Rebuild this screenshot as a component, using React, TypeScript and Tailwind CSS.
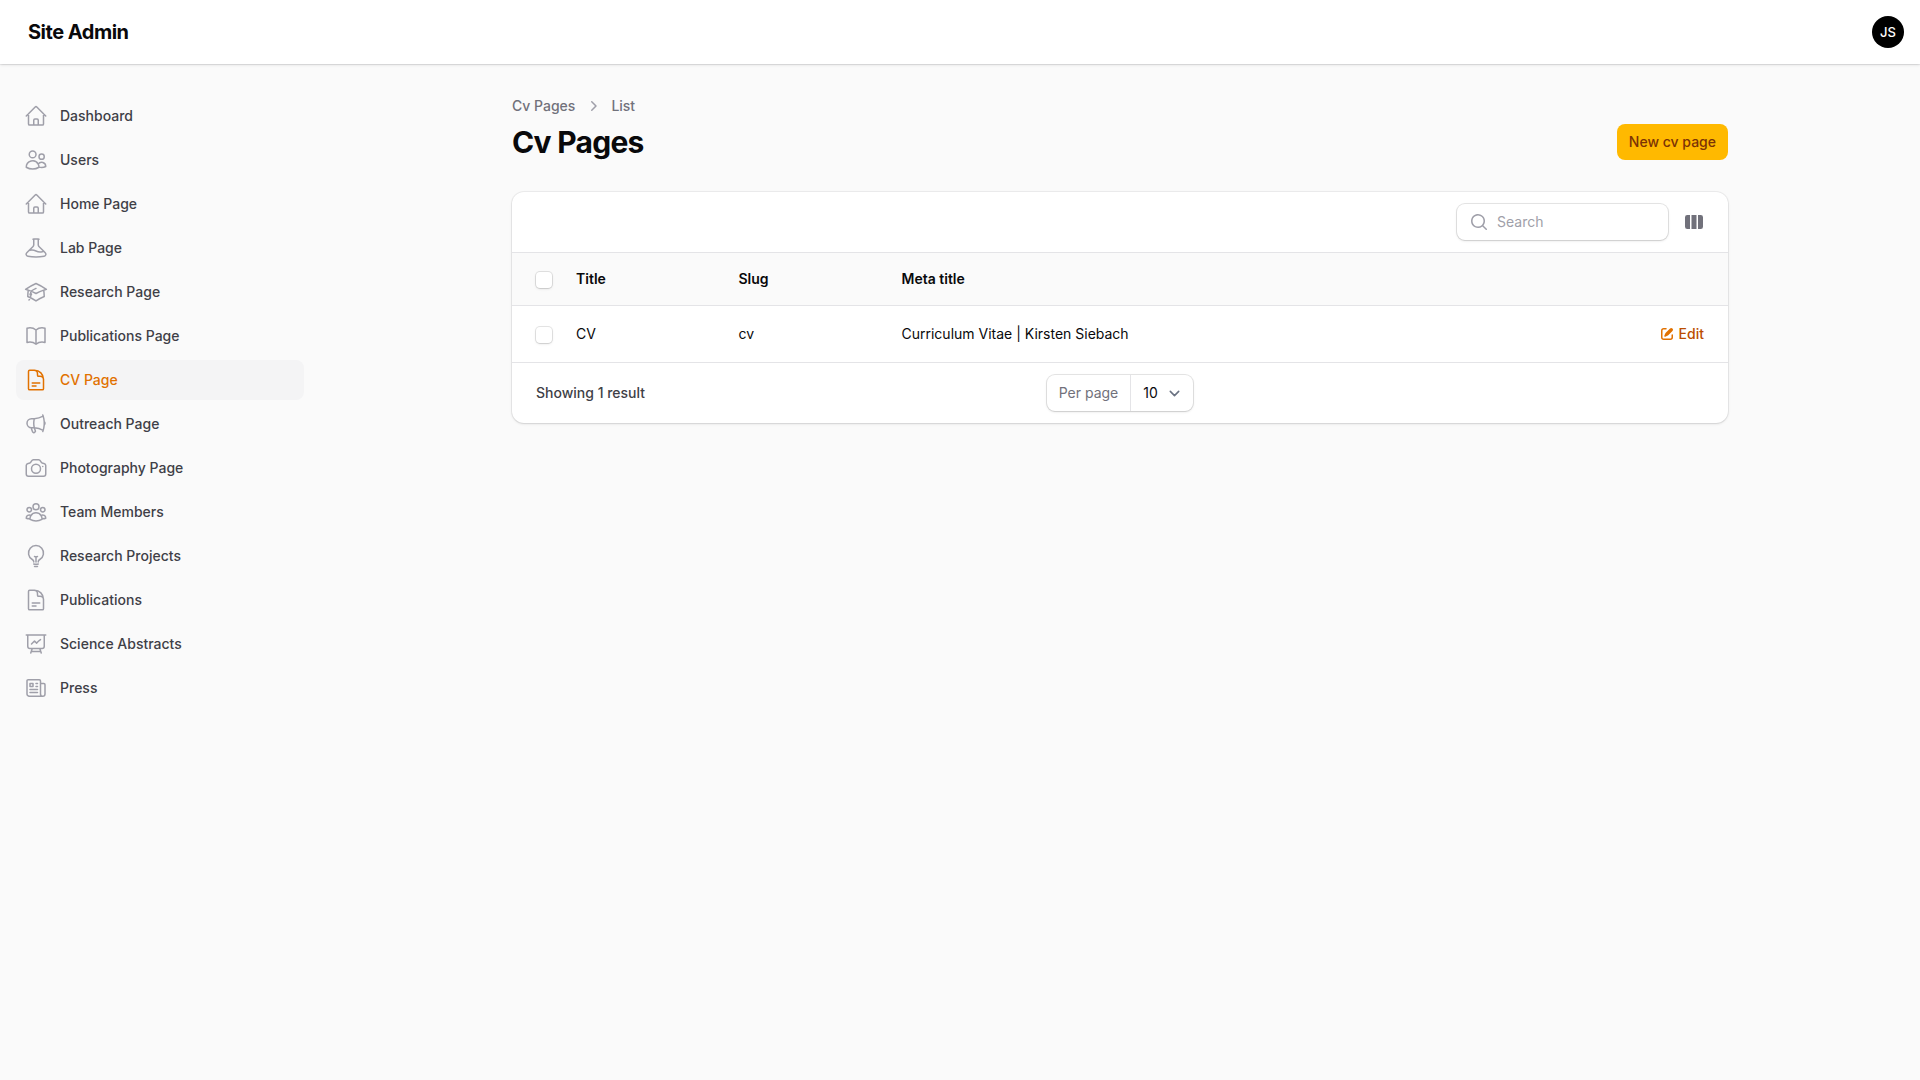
import type { ComponentType, ReactNode } from "react";
import {
  HiOutlineHome,
  HiOutlineUsers,
  HiOutlineBeaker,
  HiOutlineAcademicCap,
  HiOutlineBookOpen,
  HiOutlineDocumentText,
  HiOutlineMegaphone,
  HiOutlineCamera,
  HiOutlineUserGroup,
  HiOutlineLightBulb,
  HiOutlinePresentationChartLine,
  HiOutlineNewspaper,
} from "react-icons/hi2";

type NavItem = {
  label: string;
  icon: ComponentType<{ className?: string }>;
  active?: boolean;
};

// Document outline with two short text lines near the bottom of the sheet.
const DocumentIcon = ({ className }: { className?: string }) => (
  <HiOutlineDocumentText className={className} />
);

const navItems: NavItem[] = [
  { label: "Dashboard", icon: HiOutlineHome },
  { label: "Users", icon: HiOutlineUsers },
  { label: "Home Page", icon: HiOutlineHome },
  { label: "Lab Page", icon: HiOutlineBeaker },
  { label: "Research Page", icon: HiOutlineAcademicCap },
  { label: "Publications Page", icon: HiOutlineBookOpen },
  { label: "CV Page", icon: DocumentIcon, active: true },
  { label: "Outreach Page", icon: HiOutlineMegaphone },
  { label: "Photography Page", icon: HiOutlineCamera },
  { label: "Team Members", icon: HiOutlineUserGroup },
  { label: "Research Projects", icon: HiOutlineLightBulb },
  { label: "Publications", icon: DocumentIcon },
  { label: "Science Abstracts", icon: HiOutlinePresentationChartLine },
  { label: "Press", icon: HiOutlineNewspaper },
];

function MiniIcon({ className, children }: { className: string; children: ReactNode }) {
  return (
    <svg viewBox="0 0 20 20" fill="currentColor" fillRule="evenodd" clipRule="evenodd" className={className}>
      {children}
    </svg>
  );
}

function Topbar() {
  return (
    <header className="relative flex h-16 items-center justify-between bg-white pr-4 pl-7 shadow-sm ring-1 ring-zinc-950/5">
      <div className="text-xl leading-5 font-bold tracking-tight text-zinc-950">Site Admin</div>
      <div className="flex size-8 items-center justify-center rounded-full bg-black pt-px text-[13px] font-medium text-white">
        JS
      </div>
    </header>
  );
}

function Sidebar() {
  return (
    <nav className="w-80 shrink-0 px-4 py-8">
      <ul className="flex flex-col gap-1">
        {navItems.map(({ label, icon: Icon, active }) => (
          <li
            key={label}
            className={`flex items-center gap-3 rounded-lg p-2 text-sm font-medium ${
              active ? "bg-zinc-100 text-[#e17100]" : "text-zinc-700"
            }`}
          >
            <Icon className={`size-6 ${active ? "text-[#e17100]" : "text-zinc-400"}`} />
            <span className="leading-5">{label}</span>
          </li>
        ))}
      </ul>
    </nav>
  );
}

function Checkbox() {
  return (
    <span className="mt-0.5 block size-4 rounded-sm bg-white shadow-sm ring-1 ring-zinc-950/10" />
  );
}

const columns = "grid grid-cols-[52px_162.5px_163px_1fr_81px] items-center";

function TableCard() {
  return (
    <section className="rounded-xl bg-white shadow-sm ring-1 ring-zinc-950/5">
      <div className="flex items-center justify-end gap-4 px-6 py-3">
        <div className="flex h-9 w-[211px] items-center gap-2 rounded-lg bg-white pl-3 shadow-sm ring-1 ring-zinc-950/10">
          <MiniIcon className="size-5 text-zinc-400">
            <path d="M9 3.5a5.5 5.5 0 1 0 0 11 5.5 5.5 0 0 0 0-11ZM2 9a7 7 0 1 1 12.452 4.391l3.328 3.329a.75.75 0 1 1-1.06 1.06l-3.329-3.328A7 7 0 0 1 2 9Z" />
          </MiniIcon>
          <span className="text-sm text-zinc-400">Search</span>
        </div>
        <MiniIcon className="size-5 text-zinc-500">
          <path d="M14 17h2.75A2.25 2.25 0 0 0 19 14.75v-9.5A2.25 2.25 0 0 0 16.75 3H14v14ZM12.5 3h-5v14h5V3ZM3.25 3H6v14H3.25A2.25 2.25 0 0 1 1 14.75v-9.5A2.25 2.25 0 0 1 3.25 3Z" />
        </MiniIcon>
      </div>

      <div className={`${columns} h-[53px] border-t border-zinc-200 bg-zinc-50 text-sm font-semibold text-zinc-950`}>
        <div className="pl-6"><Checkbox /></div>
        <div className="pl-3">Title</div>
        <div className="pl-3">Slug</div>
        <div className="pl-3">Meta title</div>
        <div />
      </div>

      <div className={`${columns} h-[57px] border-t border-zinc-200 text-sm text-zinc-950`}>
        <div className="pl-6"><Checkbox /></div>
        <div className="pl-3">CV</div>
        <div className="pl-3">cv</div>
        <div className="pl-3">Curriculum Vitae | Kirsten Siebach</div>
        <div className="flex items-center justify-end gap-1 pr-6 font-medium text-[#bb4d00]">
          <svg viewBox="0 0 16 16" fill="currentColor" className="size-4 text-[#e17100]">
            <path d="M13.488 2.513a1.75 1.75 0 0 0-2.475 0L6.75 6.774a2.75 2.75 0 0 0-.596.892l-.848 2.047a.75.75 0 0 0 .98.98l2.047-.848a2.75 2.75 0 0 0 .892-.596l4.261-4.262a1.75 1.75 0 0 0 0-2.474Z" />
            <path d="M4.75 3.5c-.69 0-1.25.56-1.25 1.25v6.5c0 .69.56 1.25 1.25 1.25h6.5c.69 0 1.25-.56 1.25-1.25V9A.75.75 0 0 1 14 9v2.25A2.75 2.75 0 0 1 11.25 14h-6.5A2.75 2.75 0 0 1 2 11.25v-6.5A2.75 2.75 0 0 1 4.75 2H7a.75.75 0 0 1 0 1.5H4.75Z" />
          </svg>
          Edit
        </div>
      </div>

      <div className="grid grid-cols-[1fr_auto_1fr] items-center border-t border-zinc-200 px-6 py-3">
        <div className="text-sm font-medium text-zinc-700">Showing 1 result</div>
        <div className="flex h-9 items-center rounded-lg bg-white text-sm shadow-sm ring-1 ring-zinc-950/10">
          <div className="flex h-full items-center border-r border-zinc-200 px-3 text-zinc-500">
            Per page
          </div>
          <div className="flex w-[62px] items-center justify-between pr-2 pl-3 text-zinc-950">
            10
            <svg viewBox="0 0 20 20" fill="none" className="size-[21px] text-gray-500">
              <path
                d="M6 8l4 4 4-4"
                stroke="currentColor"
                strokeWidth="1.5"
                strokeLinecap="round"
                strokeLinejoin="round"
              />
            </svg>
          </div>
        </div>
        <div />
      </div>
    </section>
  );
}

export default function App() {
  return (
    <div className="min-h-screen bg-zinc-50 font-['Inter',sans-serif] antialiased">
      <Topbar />
      <div className="flex">
        <Sidebar />
        <main className="mx-auto flex w-full max-w-7xl flex-col gap-8 px-8 py-8">
          <div className="flex items-end justify-between">
            <div>
              <div className="mb-2 flex items-center gap-2 text-sm font-medium text-zinc-500">
                <span>Cv Pages</span>
                <MiniIcon className="size-5 text-zinc-400">
                  <path d="M8.22 5.22a.75.75 0 0 1 1.06 0l4.25 4.25a.75.75 0 0 1 0 1.06l-4.25 4.25a.75.75 0 0 1-1.06-1.06L11.94 10 8.22 6.28a.75.75 0 0 1 0-1.06Z" />
                </MiniIcon>
                <span>List</span>
              </div>
              <h1 className="text-3xl font-bold tracking-tight text-zinc-950">Cv Pages</h1>
            </div>
            <div className="flex h-9 items-center rounded-lg bg-[#ffb900] px-3 text-sm font-medium text-[#7b3306]">
              New cv page
            </div>
          </div>
          <TableCard />
        </main>
      </div>
    </div>
  );
}
